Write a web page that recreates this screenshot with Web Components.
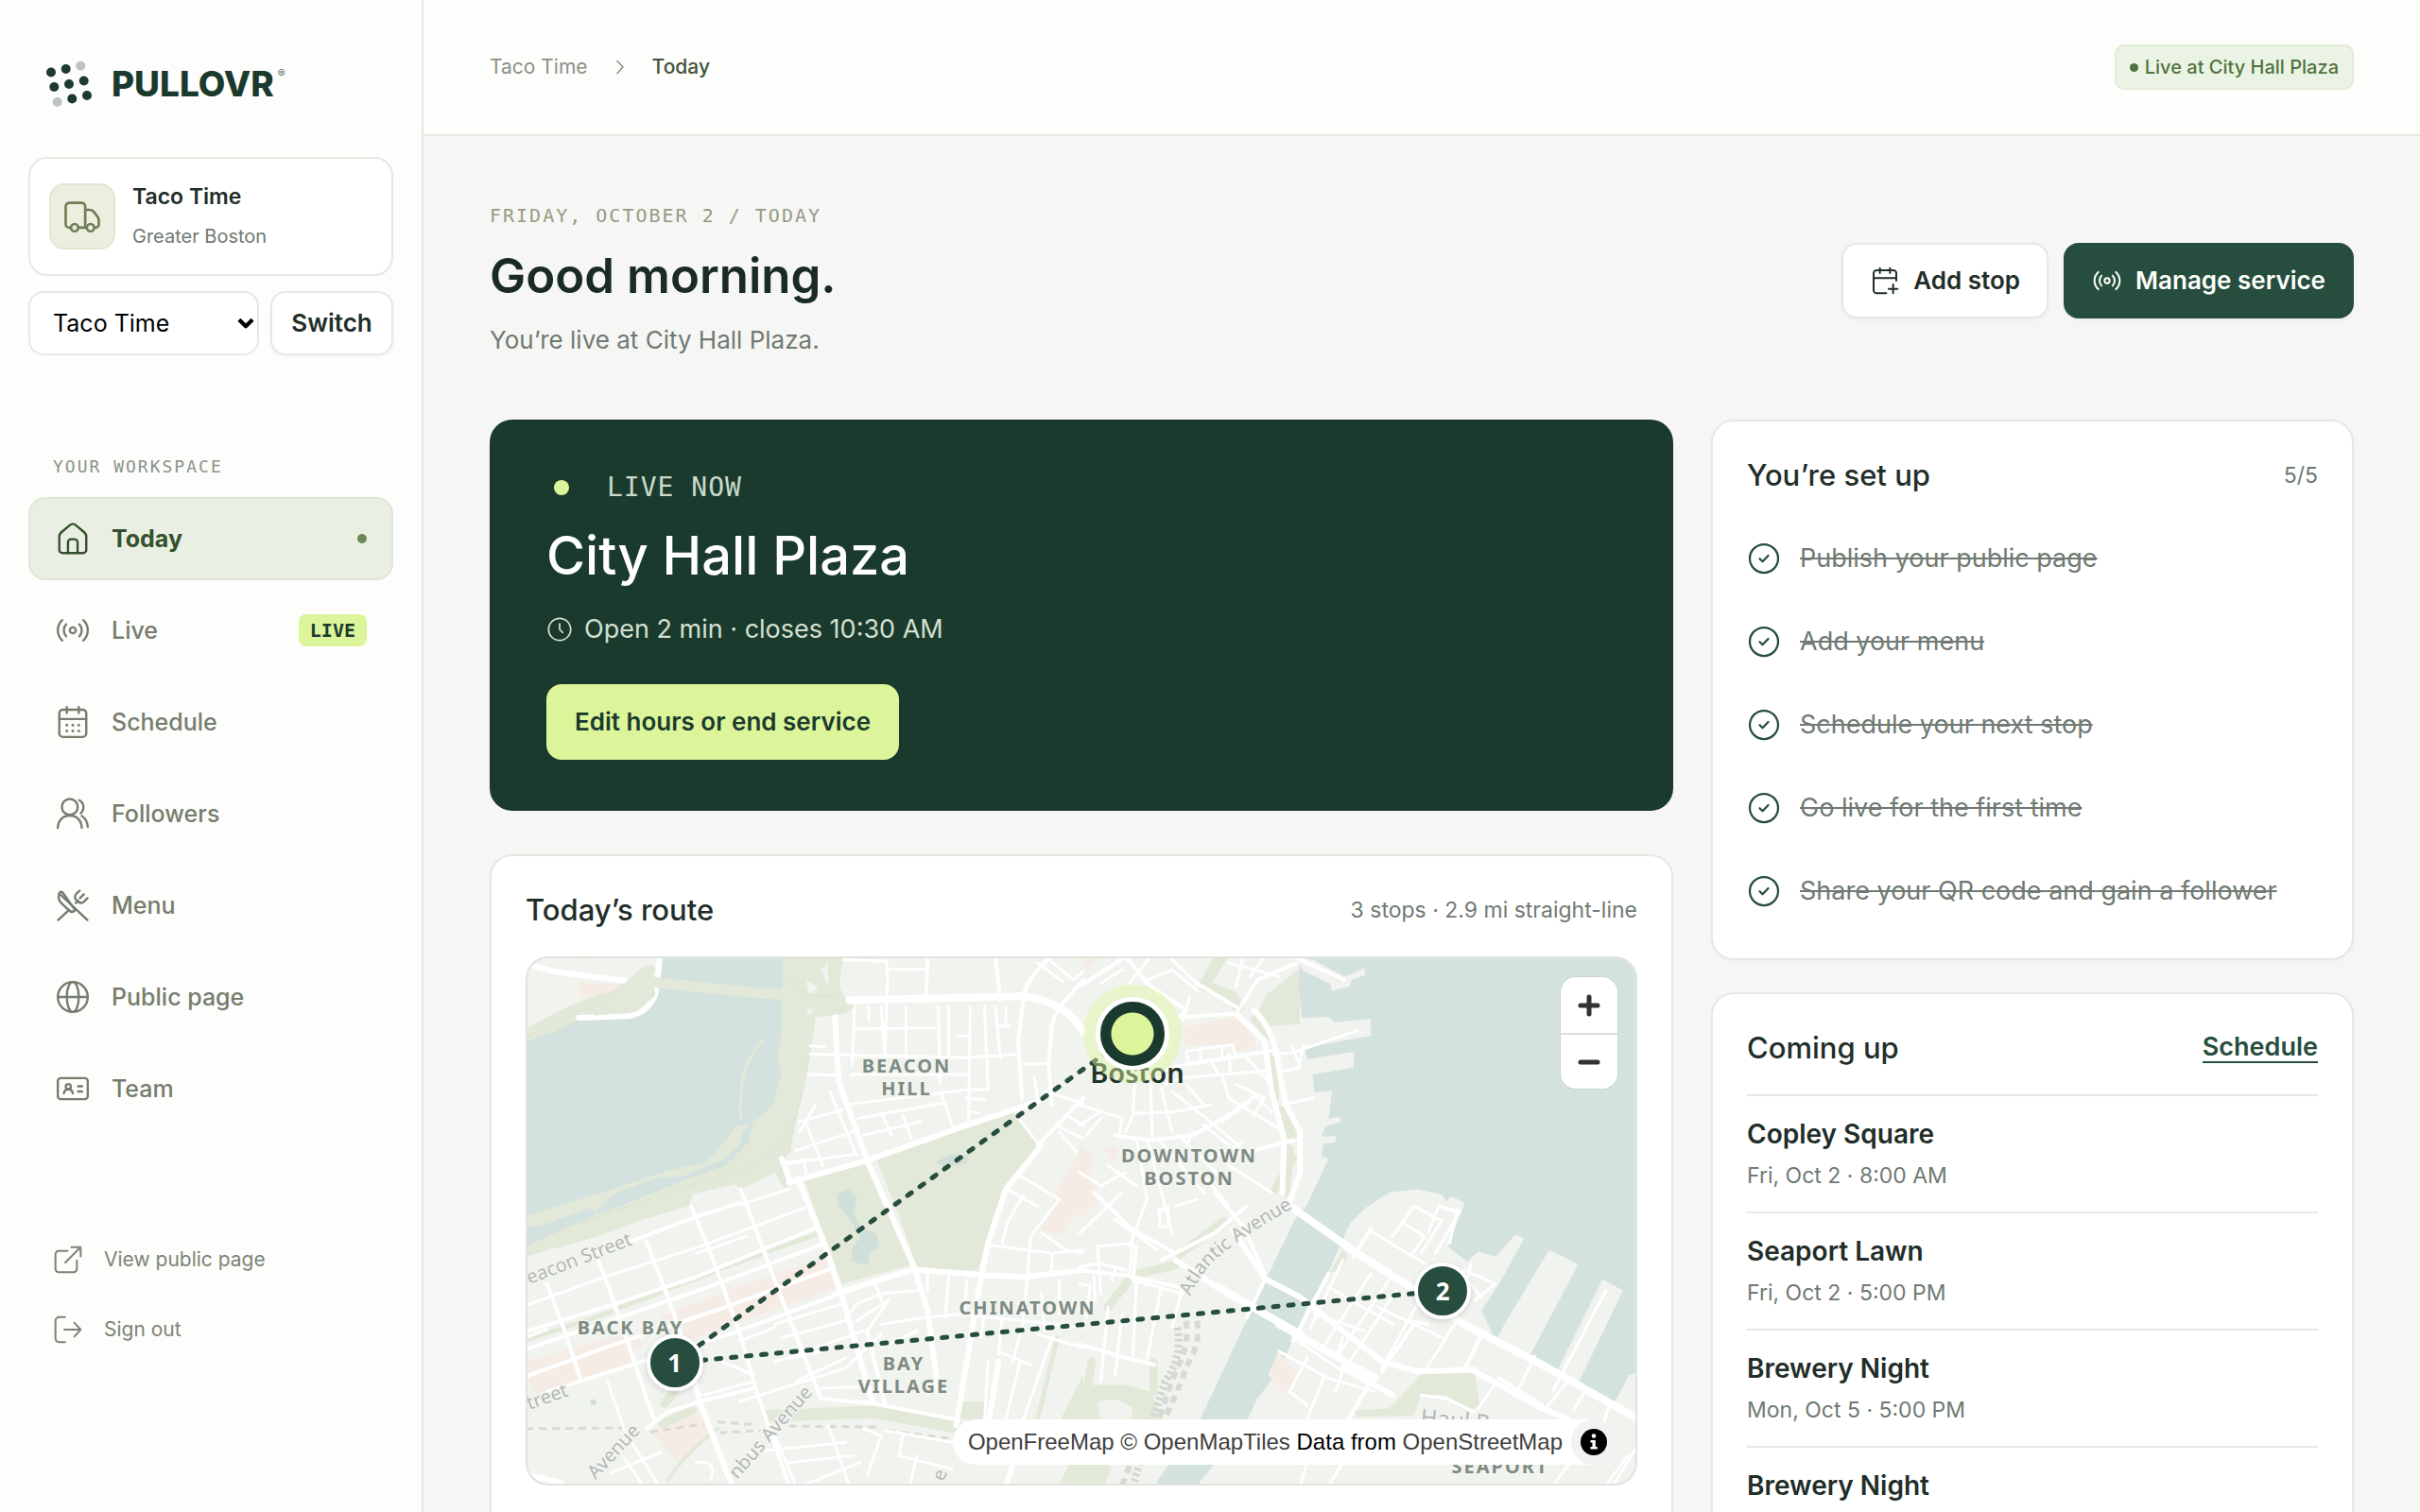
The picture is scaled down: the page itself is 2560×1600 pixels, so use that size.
<!DOCTYPE html>
<html lang="en">
<head>
<meta charset="utf-8">
<meta name="viewport" content="width=device-width, initial-scale=1">
<title>Pullovr – Today</title>
<style>
  :root {
    --ink: #1f2e29; --deep: #1b3a2e; --green: #264d3d; --lime: #ddf59a;
    --muted: #6f7a72; --nav: #757d6e; --line: #e6e8e3; --paper: #fdfdfb; --bg: #f6f6f4;
    --mono: "DejaVu Sans Mono", monospace;
  }
  html, body { margin: 0; height: 100%; }
  body { font-family: Inter, sans-serif; color: var(--ink); background: var(--bg); }
</style>
</head>
<body>
<pv-app></pv-app>
<script>
const define = (name, css, html) => customElements.define(name, class extends HTMLElement {
  connectedCallback() {
    if (this.shadowRoot) return;
    const root = this.attachShadow({ mode: 'open' });
    const t = document.createElement('template');
    t.innerHTML = `<style>*{box-sizing:border-box}${css}</style>` + (typeof html === 'function' ? html(this) : html);
    root.append(t.content.cloneNode(true));
  }
});

/* ---------- icons ---------- */
const ICONS = {
  home: '<path d="M3 10.4c0-1.1.4-1.8 1.2-2.5l5.9-5a3 3 0 0 1 3.8 0l5.9 5c.8.7 1.2 1.4 1.2 2.5V19.6a2 2 0 0 1-2 2H5a2 2 0 0 1-2-2z"/><path d="M8.8 21.6v-7.2a2 2 0 0 1 2-2h2.4a2 2 0 0 1 2 2v7.2"/>',
  live: '<circle cx="12" cy="12" r="2"/><path d="M7.6 8C6.6 9 6 10.4 6 12s.6 3 1.6 4M16.400 8c1 1 1.600 2.400 1.600 4s-.6 3-1.600 4M5 5.200C3.100 6.900 2 9.300 2 12s1.100 5.100 3 6.800M19 5.200c1.900 1.700 3 4.100 3 6.800s-1.100 5.100-3 6.800"/>',
  calendar: '<rect x="3" y="3.800" width="18" height="18.200" rx="2.400"/><path d="M8 2v4M16 2v4M3 10h18"/><path stroke-width="1.900" d="M8 14h.01M12 14h.01M16 14h.01M8 18h.01M12 18h.01M16 18h.01"/>',
  add: '<path d="M21 12V6.200a2.400 2.400 0 0 0-2.400-2.400H5.400A2.400 2.400 0 0 0 3 6.200v13.400A2.400 2.400 0 0 0 5.400 22H13M8 2v4M16 2v4M3 10h18M18.500 15v7M15 18.500h7"/>',
  users: '<circle cx="10" cy="7.500" r="5.300"/><path d="M2 21.500c.2-5 3.300-8.200 8-8.200s7.800 3.200 8 8.200M16.300 3a5.300 5.300 0 0 1 1 8.700M18 13.500c2.300 1.500 3.800 4.200 4 7.400"/>',
  menu: '<path d="m2.200 21.800 7.300-6.700M14 10.500l1.700-1.600M16.600 2.200 14.300 4.400c-1.300 1.300-1.100 2.900-.1 3.900l1.300 1.200c1.100 1 2.700 1.200 4 0l2.300-2.300M19.400 4.700l-2.600 2.500M21.800 21.800 3.400 4.500"/><path d="M3.300 3.400c-1.300 1.600-1 5 .6 6.600l5.500 5.400c1.100 1.100 2.700 1.300 4.200-.2L5.400 3.600c-.6-.7-1.500-.9-2.100-.2z"/>',
  globe: '<circle cx="12" cy="12" r="10"/><ellipse cx="12" cy="12" rx="4" ry="10"/><path d="M2 12h20"/>',
  card: '<rect x="2" y="5" width="20" height="14" rx="2"/><circle cx="9" cy="10.600" r="1.700"/><path d="M6 15.200c.3-1.700 1.400-2.700 3-2.700s2.700 1 3 2.700M15.500 10.400h2.700M15.500 13.900h2.700"/>',
  external: '<path d="M11.500 5H4.600A2.600 2.600 0 0 0 2 7.600v11.800A2.600 2.600 0 0 0 4.600 22h11.800a2.600 2.600 0 0 0 2.600-2.600V12.500M9.800 14.200 21.600 2.400M14.600 2h7.400v7.400"/>',
  out: '<path d="M9.500 2H5a3 3 0 0 0-3 3v14a3 3 0 0 0 3 3h4.500M9 12h13M17 6.500l5 5.500-5 5.500"/>',
  truck: '<path d="M5.200 18.800H4a2 2 0 0 1-2-2V6a2.200 2.200 0 0 1 2.200-2.200h7.400A2.200 2.200 0 0 1 13.800 6v12.800H9.500M13.800 8h2.700c1.100 0 1.900.4 2.500 1.200l2.300 3.100c.5.6.7 1.200.7 2v2.500a2 2 0 0 1-2 2h-.7M13.800 18.800h.8"/><circle cx="7.400" cy="18.800" r="2.200"/><circle cx="17" cy="18.800" r="2.200"/>',
  clock: '<circle cx="12" cy="12" r="10"/><path d="M12 7v5l2.800 2.800"/>',
  check: '<circle cx="12" cy="12" r="10"/><path d="m9 12.200 2 2 4-4.200"/>',
  chevron: '<path d="m9 5.500 6 6.500-6 6.500"/>',
  down: '<path stroke-width="5" stroke-linecap="butt" d="m3.500 7.500 8.500 8.500 8.500-8.500"/>'
};
define('pv-icon', `:host{display:block;flex:none;width:32px;height:32px}svg{display:block;width:100%;height:100%}`,
  el => `<svg viewBox="0 0 24 24" fill="none" stroke="currentColor" stroke-width="1.500" stroke-linecap="round" stroke-linejoin="round" aria-hidden="true">${ICONS[el.getAttribute('name')]}</svg>`);

/* ---------- basic controls ---------- */
define('pv-button', `
  :host{display:block}
  button{display:flex;align-items:center;justify-content:center;gap:14px;width:100%;height:80px;padding:0 28px;border:2px solid var(--line);border-radius:16px;background:#fff;color:var(--ink);font:600 26px/32px Inter,sans-serif;white-space:nowrap;box-shadow:0 2px 4px #1c3a2e0a}
  :host([kind=primary]) button{background:var(--green);border-color:var(--green);color:#fdfffb}
  :host([kind=lime]) button{background:var(--lime);border-color:var(--lime);color:var(--deep)}
  :host([size=small]) button{height:68px;padding:0 20px}`,
  `<button type="button"><slot name="icon"></slot><slot></slot></button>`);

define('pv-logo', `
  :host{display:block}
  a{display:flex;align-items:center;gap:20px;color:var(--deep);text-decoration:none;font:800 37px/50px Inter,sans-serif}
  svg{display:block;width:50px;height:50px}
  sup{align-self:flex-start;font:500 12px/12px Inter,sans-serif;margin:8px 0 0 -16px;color:#5e7068}`,
  `<a href="#"><svg viewBox="0 0 50 50" fill="#1c3a2e" aria-hidden="true">
    <circle cx="6" cy="12.500" r="5"/><circle cx="21.700" cy="9" r="5"/><circle cx="37.300" cy="5.700" r="5" fill="#bcc5c0"/>
    <circle cx="9.300" cy="28" r="5"/><circle cx="25" cy="25" r="5"/><circle cx="40.700" cy="21.500" r="5"/>
    <circle cx="12.600" cy="44" r="5" fill="#bcc5c0"/><circle cx="28.300" cy="40.500" r="5"/><circle cx="44" cy="37" r="5"/></svg>
    <span>PULLOVR</span><sup>®</sup></a>`);

/* ---------- sidebar ---------- */
define('pv-account', `
  :host{display:flex;align-items:center;gap:18px;height:126px;padding:0 20px;border:2px solid var(--line);border-radius:20px;background:#fff}
  .badge{display:grid;place-items:center;width:70px;height:70px;border:2px solid #e3e7d2;border-radius:16px;background:#eceedf;color:#707c53}
  pv-icon{width:42px;height:42px}
  div{display:grid;gap:10px} strong{font:600 23px/32px Inter,sans-serif} span{font:400 20px/32px Inter,sans-serif;color:var(--muted)}`,
  `<i class="badge"><pv-icon name="truck"></pv-icon></i><div><strong>Taco Time</strong><span>Greater Boston</span></div>`);

define('pv-switcher', `
  :host{display:block}
  form{display:grid;grid-template-columns:1fr 130px;gap:12px}
  label{display:grid;align-items:center}
  select{grid-area:1/1;appearance:none;width:100%;height:68px;padding:0 24px;border:2px solid var(--line);border-radius:16px;background:#fff;color:#000;font:400 25px/32px Inter,sans-serif}
  pv-icon{grid-area:1/1;justify-self:end;width:20px;height:20px;margin-right:4px;color:#000;pointer-events:none}`,
  `<form><label><select aria-label="Truck"><option>Taco Time</option></select><pv-icon name="down"></pv-icon></label><pv-button size="small">Switch</pv-button></form>`);

define('pv-nav-item', `
  :host{display:block}
  a{display:flex;align-items:center;gap:22px;height:88px;padding:0 26px;border:2px solid transparent;border-radius:18px;color:var(--nav);font:500 25px/32px Inter,sans-serif;text-decoration:none}
  pv-icon{width:38px;height:38px}
  span{flex:1}
  :host([active]) a{background:#eaefe3;border-color:#dfe6d8;color:#34502c;font-weight:700}
  i{width:10px;height:10px;border-radius:50%;background:#6b8a58}
  b{padding:0 12px;border-radius:8px;background:var(--lime);color:var(--deep);font:700 20px/34px var(--mono)}`,
  el => `<a href="#"><pv-icon name="${el.getAttribute('icon')}"></pv-icon><span><slot></slot></span>${el.hasAttribute('active') ? '<i></i>' : ''}${el.hasAttribute('tag') ? `<b>${el.getAttribute('tag')}</b>` : ''}</a>`);

define('pv-foot-link', `
  :host{display:block}
  a{display:flex;align-items:center;gap:22px;height:40px;padding-left:26px;color:#7b8474;font:400 21px/32px Inter,sans-serif;text-decoration:none}`,
  el => `<a href="#"><pv-icon name="${el.getAttribute('icon')}"></pv-icon><slot></slot></a>`);

define('pv-sidebar', `
  :host{display:flex;flex-direction:column;padding:64px 30px 0;background:var(--paper);border-right:2px solid var(--line)}
  pv-logo{margin:0 18px 52px}
  pv-switcher{margin-top:16px}
  h2{margin:106px 26px 20px;font:400 18px/24px var(--mono);letter-spacing:2px;color:#8a9389}
  nav{display:grid;gap:9px}
  footer{display:grid;gap:34px;margin-top:117px}`,
  `<pv-logo></pv-logo><pv-account></pv-account><pv-switcher></pv-switcher>
   <h2>YOUR WORKSPACE</h2>
   <nav>
    <pv-nav-item icon="home" active>Today</pv-nav-item>
    <pv-nav-item icon="live" tag="LIVE">Live</pv-nav-item>
    <pv-nav-item icon="calendar">Schedule</pv-nav-item>
    <pv-nav-item icon="users">Followers</pv-nav-item>
    <pv-nav-item icon="menu">Menu</pv-nav-item>
    <pv-nav-item icon="globe">Public page</pv-nav-item>
    <pv-nav-item icon="card">Team</pv-nav-item>
   </nav>
   <footer><pv-foot-link icon="external">View public page</pv-foot-link><pv-foot-link icon="out">Sign out</pv-foot-link></footer>`);

/* ---------- header ---------- */
define('pv-topbar', `
  :host{display:flex;flex:none;align-items:center;justify-content:space-between;height:144px;padding:0 70px;background:var(--paper);border-bottom:2px solid var(--line)}
  nav{display:flex;align-items:center;gap:22px;font:400 21px/32px Inter,sans-serif}
  a{color:#8b9187;text-decoration:none} b{font-weight:500;color:#41543a}
  pv-icon{width:24px;height:24px;color:#8b9187}
  p{display:flex;align-items:center;gap:7px;height:48px;margin:0;padding:0 14px;border:2px solid #e1ebd8;border-radius:10px;background:#ebf3e4;color:#50743f;font:500 20px/32px Inter,sans-serif}
  i{width:9px;height:9px;border-radius:50%;background:currentColor}`,
  `<nav aria-label="Breadcrumb"><a href="#">Taco Time</a><pv-icon name="chevron"></pv-icon><b>Today</b></nav><p><i></i>Live at City Hall Plaza</p>`);

define('pv-greeting', `
  :host{display:flex;align-items:center;justify-content:space-between}
  .eyebrow{margin:0;font:400 20px/28px var(--mono);letter-spacing:2px;color:#959b83}
  h1{margin:16px 0 14px;font:600 51px/68px Inter,sans-serif;color:#1a2a24}
  .lead{margin:0;font:400 26px/40px Inter,sans-serif;color:var(--muted)}
  .actions{display:flex;gap:16px}`,
  `<div><p class="eyebrow">FRIDAY, OCTOBER 2 / TODAY</p><h1>Good morning.</h1><p class="lead">You’re live at City Hall Plaza.</p></div>
   <div class="actions"><pv-button><pv-icon slot="icon" name="add"></pv-icon>Add stop</pv-button><pv-button kind="primary"><pv-icon slot="icon" name="live"></pv-icon>Manage service</pv-button></div>`);

/* ---------- cards ---------- */
define('pv-hero', `
  :host{display:flex;flex-direction:column;align-items:flex-start;padding:54px 60px;border-radius:24px;background:var(--deep);color:#fff}
  .state{display:flex;align-items:center;gap:40px;margin:0;padding-left:8px;font:400 28px/36px var(--mono);letter-spacing:1px;color:#c9dac9}
  i{width:16px;height:16px;border-radius:50%;background:var(--lime)}
  h2{margin:18px 0 22px;font:500 56px/72px Inter,sans-serif}
  .meta{display:flex;align-items:center;gap:12px;margin:0 0 38px;font:400 27px/40px Inter,sans-serif;color:#d3e0d0}
  pv-icon{width:28px;height:28px}`,
  `<p class="state"><i></i>LIVE NOW</p><h2>City Hall Plaza</h2><p class="meta"><pv-icon name="clock"></pv-icon>Open 2 min · closes 10:30 AM</p><pv-button kind="lime">Edit hours or end service</pv-button>`);

define('pv-card', `
  :host{display:block;padding:36px 36px var(--foot,64px);border:2px solid var(--line);border-radius:24px;background:#fff;box-shadow:0 2px 4px #1c3a2e08}
  header{display:flex;align-items:center;justify-content:space-between;height:42px;margin-bottom:var(--gap,28px)}
  h2{margin:0;font:500 31px/40px Inter,sans-serif;color:#1f2e29}`,
  el => `<header><h2>${el.getAttribute('heading')}</h2><slot name="aside"></slot></header><slot></slot>`);

define('pv-check-item', `
  :host{display:flex;align-items:center;gap:20px;height:88px;font:400 27px/40px Inter,sans-serif;color:var(--muted)}
  pv-icon{width:36px;height:36px;color:var(--green)} s{text-decoration-thickness:2px}`,
  `<pv-icon name="check"></pv-icon><s><slot></slot></s>`);

define('pv-stop', `
  :host{display:grid;gap:4px;padding:20px 0 18px;border-top:2px solid var(--line)}
  strong{font:600 28px/40px Inter,sans-serif;color:#1f2e29} span{font:400 23px/40px Inter,sans-serif;color:var(--muted)}`,
  el => `<strong>${el.getAttribute('place')}</strong><span><slot></slot></span>`);

/* ---------- map ---------- */
const MAP_LEFT = `
 <path class="park" d="M0 890 200 830 330 780 460 740 470 705 590 675 605 690 700 640 725 685 742 680 735 640 722 610 745 580 760 490 800 300 815 180 900 170 926 150 895 120 882 90 892 0H0Z"/>
 <path class="water" d="M0 250 80 225 160 180 290 178 350 150 376 90 388 0H725L722 100 720 220 708 300 720 345 695 440 655 480 625 498 590 505 550 560 510 610 400 635 200 705 0 770Z"/>
 <path class="water" d="M0 805 60 792 180 745 200 755 225 725 255 700 370 655 450 650 560 600 600 560 612 520 640 485 628 550 560 620 420 675 240 752 190 768 0 862Z"/>
 <path class="thinpark" d="M665 250C610 320 600 380 605 480"/>
 <path class="land" d="M0 0H380L362 60 330 30 300 60 250 90 120 150 0 215Z"/>
 <path class="pink" d="M145 75 270 85 250 100 160 125ZM100 0H200L170 10Z"/>
 <path class="land" d="M790 70 822 90 795 125ZM830 40 850 20 852 90ZM790 150 812 160 795 175Z"/>
 <g class="r5"><path d="M0 22 80 45 280 72"/><path d="M378 0 366 110Q345 168 290 177L150 182"/></g>
 <g class="parkline" stroke-width="11"><path d="M0 232 120 165 250 118 330 60 350 40"/><path d="M200 160 300 150 350 110 340 60"/><path d="M345 75 480 90 620 105 740 115 905 145"/></g>
 <g class="thinpark2"><path d="M795 300C770 480 740 600 560 650S150 800 0 840"/><path d="M740 60C780 130 860 130 885 100"/><path d="M0 240 130 172 260 120"/></g>
 <path class="pink" d="M380 1065 700 940 850 890 870 985 600 1085 430 1150 380 1160ZM0 1200 300 1110 330 1160 20 1290ZM20 1250 290 1160 310 1205 30 1298ZM350 1405 500 1350 520 1400 430 1500ZM1568 560 1500 680 1450 810 1500 830 1568 740Z"/>
 <path class="park" d="M785 665 955 612 1020 760 1080 915 890 970 855 880ZM985 600 1370 465 1440 560 1350 690 1300 850 1270 932 1100 925 1050 770Z"/>
 <path class="pond" d="M875 705 910 690 932 715 922 760 942 805 985 820 995 860 968 880 962 915 915 905 920 860 940 835 915 785 880 740ZM1150 610 1200 585 1245 590 1240 612 1180 625Z"/>
 <g class="parkline" stroke-width="5"><path d="M0 1137 242 1053M262 1043 380 995M405 983 530 935M550 925 665 882M685 872 815 825"/></g>
 <g class="parkline" stroke-width="13"><path d="M685 1362 980 1350 1210 1395"/><path d="M385 1385 470 1345M390 1325 420 1290" stroke-width="9"/><path d="M400 1550Q460 1460 540 1400" stroke-width="4"/><path d="M1495 1130 1440 1370" stroke-width="5"/></g>
 <path class="park" d="M1568 1240 1500 1380 1568 1380ZM1220 1320 1300 1320 1280 1380 1220 1370ZM1530 1500H1568V1568H1500Z"/>
 <circle class="pond" cx="190" cy="1321" r="8"/>
 <g class="rail"><path d="M0 1400 300 1397M350 1410 500 1385M540 1380 650 1388M545 1412 660 1405M740 1392 1000 1395M1020 1405 1200 1430"/></g>
 <g class="r2">
  <path d="M0 1035 210 955 490 860 785 745M605 735 740 690M480 880 620 830M0 1130 60 1105"/>
  <path d="M700 1090 890 1030M720 1130 900 1080M760 1180 950 1110M600 1140 700 1100"/>
  <path d="M895 10 1015 15 1018 60 1010 290M1015 38 1120 38M925 215 1150 212M965 150V190M1000 150 1010 300M1070 150V300M1160 150 1165 380M1190 150V300M1250 150 1245 495M1290 150 1300 390M1320 150 1335 300M1350 150V210M925 150 918 320M915 350H1240M800 290 1240 300 1385 290M795 350 870 352M1210 235H1245M1330 205H1360M1240 395H1300M1240 420 1290 425M1245 460 1275 465"/>
  <path d="M800 265 840 268M770 490 890 455M760 575 920 520M740 615 930 585M855 400 930 590M790 500 835 620M815 440 770 520M900 440 1240 395M935 480 1170 435M950 530 1110 490M1000 465 1030 530M1060 470 1085 540M1170 410 1200 505M730 610 830 600M780 600 790 640"/>
  <path d="M1400 320 1470 318M1430 360 1440 430M1385 480 1445 560M1460 400 1568 435M1490 500 1568 540M1520 470 1568 500M1500 520 1550 580M1440 20 1510 75M1460 0 1540 70 1568 45"/>
  <path d="M1390 650 1500 720 1420 830 1410 950M1350 690 1440 740M1400 710Q1350 780 1340 850M1300 855 1480 880 1568 870M1450 820 1520 870 1568 880M1480 880 1478 940"/>
  <path d="M1100 930 1110 990 1000 1000 930 1030 900 1080M985 975 1000 1020M930 1080 1020 1020 960 1110M1130 940V990M1190 940 1180 1070M1240 960 1235 1060M1000 1090 1130 1070 1220 1060 1568 1100M1000 1160 1100 1110"/>
  <path d="M1290 1060 1280 1130M1340 1060 1330 1180M1400 1080 1370 1200M1410 960 1395 1100M1450 1000 1460 1110M1500 960V1060M1330 1170 1420 1210M1390 1200 1350 1370M1440 1120 1568 1160M1300 1200 1290 1380M1480 1130 1400 1370"/>
  <path d="M600 1320 900 1220 1000 1120M830 1280 960 1275M760 1260 900 1190M700 1200 830 1170M550 1200 640 1240M500 1300 640 1260"/>
  <path d="M230 1260 280 1410 370 1560M280 1490 330 1568M240 1530 380 1470M480 1500Q540 1490 520 1550"/>
  <path d="M620 1470 900 1440M700 1420 760 1568M740 1500 920 1480M850 1390 910 1568M780 1568 940 1500M950 1400 1000 1420 960 1540M1060 1420 1050 1480 1200 1520M1100 1480 1080 1568M1010 1405 1200 1440"/>
 </g>
 <g class="r3">
  <path d="M270 855 470 775 605 730M0 1112 250 1030 480 950 820 803M0 1165 500 985 830 855M0 1245 250 1150 560 1040 860 925M60 1290 300 1210 600 1110 870 1005"/>
  <path d="M465 740 520 880 600 1110 650 1290 740 1568M605 690 700 960 830 1310M340 845 400 1010 440 1130 M205 900 260 1060 360 1370M60 970 110 1110 155 1255"/>
  <path d="M1400 120 1385 250 1395 420M1500 150 1480 200 1470 320 1480 440M1400 110Q1420 50 1480 0M1130 10 1125 130M1320 0 1335 130M1568 70 1500 150M1440 560 1568 420"/>
  <path d="M830 1310 975 1325 1200 1370M340 1400 400 1350 490 1320 640 1280M960 1110 1010 1325"/>
 </g>
 <g class="r5">
  <path d="M740 670 960 605 1240 500 1440 430M720 600 745 670"/><path d="M770 670 840 850 890 1010 975 1320M870 180 880 370 960 605 1090 915 1130 1050 1160 1290M440 1130 490 1320 580 1568"/>
  <path d="M870 1000 1090 928 1290 945 1400 950 1568 930M1450 560 1350 690 1300 850 1270 1010 1210 1390"/>
  <path d="M1330 1200 1300 1390M1390 1440 1350 1568"/><path d="M0 1535 100 1560"/>
 </g>
 <path class="r7" d="M910 130 1400 118Q1520 135 1568 225"/>`;
const MAP_RIGHT = `
 <path class="water" d="M620 0H1568V1235L1545 1240 1500 1330 1395 1280 1528 990 1470 958 1340 1235 1265 1185 1402 912 1320 870 1195 1090 1170 1140 1130 1050 1185 960 1250 835 1225 825 1170 890 1120 875 1090 905 1035 860 1083 730 1045 712 1030 725 1020 706 950 690 870 700 805 745 762 790 735 850 700 935 640 1040 590 1160 560 1230 500 1310 460 1400 330 1568H210L340 1370 420 1190 500 1010 550 900 605 780 640 735 700 600 680 592 685 555 720 552 720 532 680 535 690 505 735 490 730 475 700 482 710 400 660 402 655 350 770 330 772 283 700 295 640 305 632 270 820 235 818 185 720 195 700 180 625 182 615 90Z"/>
 <path class="land" d="M610 0 660 12 745 60 800 35 804 55 765 70 760 88 710 102 705 82 625 40Z"/>
 <path class="park" d="M615 40 620 200 500 210Q490 170 530 110ZM0 1270 60 1270 130 1270 200 1290 240 1380 0 1380ZM770 1345 870 1340 970 1230 1110 1225 1125 1330 1100 1345 1030 1300 960 1300 940 1360 780 1365ZM700 940 740 870 755 890 730 930ZM0 1490 90 1510 70 1568H0Z"/>
 <path class="pink" d="M290 210 430 180Q490 210 495 275L440 280 430 260 300 265ZM0 0H60L20 40ZM0 560 40 590 30 640 50 730 0 780ZM70 570 110 560 100 610ZM260 390 300 380 300 400ZM560 1170 620 1250 580 1300 530 1240Z"/>
 <g class="parkline" stroke-width="12"><path d="M400 0 350 85 430 120 445 150"/><path d="M545 280 550 420" stroke-width="8"/><path d="M490 185 530 240" stroke-width="7"/><path d="M575 450 595 530" stroke-width="12"/><path d="M590 570 580 700M600 600 550 690" stroke-width="9"/><path d="M405 785 280 885M270 915 150 945 80 1040" stroke-width="9"/><path d="M35 1200 20 1290M208 1205V1290" stroke-width="9"/></g>
 <path class="land" d="M50 1320Q110 1300 150 1340L145 1372H60Z"/>
 <path d="M275 1100 Q290 1190 240 1260 L150 1568" fill="none" stroke="#d3d7d1" stroke-width="8" stroke-dasharray="3 3" vector-effect="non-scaling-stroke"/>
 <g class="rail" style="stroke-width:6"><path d="M300 1080C310 1180 270 1210 250 1290L220 1380M330 1080C345 1160 300 1200 290 1250L240 1370M120 1568 140 1510"/></g>
 <g class="r2">
  <path d="M0 440 120 480 110 530M0 500 60 460M20 530 60 480M155 380 150 470 130 520M200 380 205 540M230 390 260 520M240 380 290 360M150 465 260 462 370 440M260 400 380 500 480 590M300 380 350 440M300 360 400 350 420 420M370 310 390 350 530 340M420 290 425 350M460 290 540 380M300 290 310 320 440 300 430 262 302 280M340 270V310M400 265V305"/>
  <path d="M420 420 560 510M440 380 520 420 490 470M470 390 540 460M440 450 500 410M400 490 480 430M350 500 420 560M280 530 420 680M220 540 350 700M320 520 300 560M420 620 540 700M370 600 460 550M190 540 260 820M160 540 190 720 140 860M80 620 160 680M60 680 130 640M0 640 60 680M340 640 420 740M270 740 330 720M220 750 250 745V800H225V750"/>
  <path d="M0 820 120 700M50 860 140 850M50 860 60 1000M0 920 60 910 130 930M100 780 220 870M150 850 140 940M0 970 30 975 20 1070M40 950 45 1020M90 960 100 930M160 960 150 1180M230 980 190 1190M120 1060 100 1240M80 1040 60 1260M290 980 260 1100M150 960 290 1000"/>
  <path d="M200 0 140 80M60 80 120 40M190 70 260 40 330 100M250 0 330 80M310 120 290 190M420 20 560 60M460 0 440 90M520 0 480 60"/>
  <path d="M570 440 655 420M600 270 620 330 570 340M630 265 615 330M545 290 600 285 780 220M620 545 560 552"/>
  <path d="M880 830 940 740 1010 780M910 790 970 830 930 890M980 820 1010 740 1060 760 1040 850M1020 780 960 880M820 815 970 910M1010 740 1070 755 1000 880"/>
  <path d="M740 900 650 1100M820 940 690 1150M870 960 720 1190M890 990 760 1200M950 1030 850 1220M700 980 880 1090M660 1060 800 1110M840 1040 1020 1130M930 1080 980 1090M1060 1080 970 1230M1080 930 1170 970 1110 1020M1100 910 1090 960 1130 1010"/>
  <path d="M600 1130 740 1230 720 1290M640 1190 590 1290 640 1330M690 1240 640 1370M560 1170 700 1250 830 1290M740 1130 720 1190M1280 1185 1230 1290M1380 1250 1310 1340M1480 990 1330 1290M1420 1290 1390 1345M1490 1330 1470 1390M960 1300 1030 1310 1110 1350M1180 1250 1120 1340"/>
  <path d="M620 1568 640 1500M700 1568 740 1500M1330 1568 1380 1500M1480 1568 1540 1480M1568 1450 1500 1568"/>
 </g>
 <g class="r3">
  <path d="M0 90 130 0M130 0 190 80M190 80 300 160 280 180M330 80 440 150M290 180 440 170M440 170 500 70 610 20M210 345 300 320 540 280M40 700 150 810 270 880M230 900 380 820 470 740M380 700 460 800 520 940M100 530 200 545 320 530 450 450M430 590 600 545M600 0 745 70"/>
  <path d="M90 1180 210 1210M0 1150 100 1180M770 890 820 805M520 960 470 1070M700 940 600 1140M830 1240 740 1400M940 1090 850 1230M1130 1120 1080 1230M1180 1250 1300 1330"/>
  <path d="M0 930 130 945 280 980M160 860 150 960"/>
 </g>
 <g class="r5">
  <path d="M440 170 520 250 540 400 575 540 570 700M490 160Q550 220 560 330L580 440 620 520 620 640 590 730"/>
  <path d="M520 955 620 1010 740 1110 850 1200 950 1230 1110 1225M270 900 400 990 600 1110M740 1220 880 1300"/>
  <path d="M1110 1230 1300 1340 1370 1370M430 810 520 955"/>
 </g>
 <g class="r7"><path d="M585 735 780 880 930 980 1080 1090 1300 1210 1568 1370"/><path d="M390 980 620 1120M560 1090 830 1250"/></g>`;

define('pv-pin', `
  :host{position:absolute;transform:translate(-50%,-50%)}
  button{display:grid;place-items:center;width:60px;height:60px;padding:0;border:4px solid #fff;border-radius:50%;background:var(--green);color:#fff;font:700 26px/32px "Noto Sans",sans-serif;box-shadow:0 2px 6px #0002}
  :host([live]) button{width:78px;height:78px;border-width:5px;background:radial-gradient(circle,var(--lime) 0 22px,var(--deep) 23px);box-shadow:0 0 0 13px #ddf59a70}`,
  el => `<button type="button" aria-label="Stop ${el.getAttribute('label')}"><slot></slot></button>`);

define('pv-map', `
  :host{display:block;position:relative;height:560px;border-radius:24px;overflow:hidden;background:#f0f2ee}
  .map{display:block;width:100%;height:100%}
  .edge{position:absolute;inset:0;border:2px solid #dfe5dd;border-radius:24px;pointer-events:none}
  .land{fill:#f1f3ef}.water{fill:#d4e2df}.pond{fill:#d1dfda}.park{fill:#e3e9d8}.pink{fill:#f6ece6}
  .parkline,.thinpark,.thinpark2,.rail,.r2,.r3,.r5,.r7{fill:none;stroke-linejoin:round;stroke-linecap:round}
  .parkline *,.thinpark,.thinpark2 *,.rail *,.r2 *,.r3 *,.r5 *,.r7,.r7 *{vector-effect:non-scaling-stroke}
  .parkline,.thinpark{stroke:#e3e9d8}.thinpark{stroke-width:3}.thinpark2{stroke:#dbe2cf;stroke-width:1}
  .rail{stroke:#d7dad4;stroke-width:3;stroke-dasharray:8 6;stroke-linecap:butt}
  .r2,.r3,.r5,.r7{stroke:#fff}.r2{stroke-width:3}.r3{stroke-width:4}.r5{stroke-width:6}.r7{stroke-width:8}
  text{font-family:"Noto Sans",sans-serif}
  .area{font-weight:700;font-size:20px;letter-spacing:2px;fill:#7d8b83;text-anchor:middle;stroke:#f3f5f1;stroke-width:3px;paint-order:stroke}
  .street{font-size:20px;fill:#b3b8b3;stroke:#f3f5f1;stroke-width:3px;paint-order:stroke}
  .city{font-weight:600;font-size:29px;fill:#22352d;text-anchor:middle}
  .route{fill:none;stroke:var(--green);stroke-width:5;stroke-linecap:round;stroke-dasharray:5 11}
  .zoom{position:absolute;top:22px;right:21px;display:grid;width:60px;border-radius:16px;background:#fff;overflow:hidden;box-shadow:0 0 0 1px #0000000d}
  .zoom button{display:grid;place-items:center;height:59px;padding:0;border:0;background:none}
  .zoom button+button{border-top:2px solid #ddd}
  .zoom svg{width:26px;height:26px}
  .credit{position:absolute;right:22px;bottom:22px;display:flex;align-items:center;gap:9px;height:48px;padding:0 0 0 16px;border-radius:24px;background:#fff;color:#000;font:24px/32px "Liberation Sans",sans-serif;white-space:nowrap}
  .credit a{color:#404040;text-decoration:none}
  .credit button{display:grid;width:48px;height:48px;place-items:center;padding:0;border:0;border-radius:50%;background:#f2f2f2}
  .credit svg{width:28px;height:28px}`,
  `<svg class="map" viewBox="0 0 1176 560" preserveAspectRatio="xMidYMid slice" role="img" aria-label="Map of today's route through Boston">
    <rect class="land" width="1176" height="560"/>
    <g transform="scale(.3763 .3571)">${MAP_LEFT}</g>
    <g transform="translate(586 0) scale(.3763 .3571)">${MAP_RIGHT}</g>
    <text class="street" transform="translate(4 347) rotate(-21)">eacon Street</text>
    <text class="street" transform="translate(4 480) rotate(-20)">treet</text>
    <text class="street" transform="translate(74 554) rotate(-47)">Avenue</text>
    <text class="street" transform="translate(224 554) rotate(-49)">nbus Avenue</text>
    <text class="street" transform="translate(443 556) rotate(-75)">e</text>
    <path id="atl" d="M703 360C718 326 736 310 812 266" fill="none"/>
    <text class="street"><textPath href="#atl">Atlantic Avenue</textPath></text>
    <text class="street" style="font-size:24px" transform="translate(946 496) rotate(5)">Haul R</text>
    <text class="area" x="403" y="123">BEACON</text><text class="area" x="403" y="147">HILL</text>
    <text class="area" x="702" y="218">DOWNTOWN</text><text class="area" x="702" y="242">BOSTON</text>
    <text class="area" x="531" y="379">CHINATOWN</text>
    <text class="area" x="111" y="400">BACK BAY</text>
    <text class="area" x="400" y="438">BAY</text><text class="area" x="400" y="462">VILLAGE</text>
    <text class="area" x="1031" y="547">SEAPORT</text>
    <text class="city" x="647" y="134">Boston</text>
    <path class="route" d="M642 82 158 430 970 354"/>
   </svg>
   <pv-pin live label="live" style="left:54.6%;top:14.6%"></pv-pin>
   <pv-pin label="1" style="left:13.4%;top:76.8%">1</pv-pin>
   <pv-pin label="2" style="left:82.5%;top:63.2%">2</pv-pin>
   <div class="edge"></div>
   <div class="zoom"><button type="button" aria-label="Zoom in"><svg viewBox="0 0 26 26" stroke="#333" stroke-width="5" stroke-linecap="round"><path d="M4 13h18M13 4v18"/></svg></button><button type="button" aria-label="Zoom out"><svg viewBox="0 0 26 26" stroke="#333" stroke-width="5" stroke-linecap="round"><path d="M4 13h18"/></svg></button></div>
   <div class="credit"><span><a href="#">OpenFreeMap</a> <a href="#">© OpenMapTiles</a> Data from <a href="#">OpenStreetMap</a></span><button type="button" aria-label="Attribution"><svg viewBox="0 0 28 28"><circle cx="14" cy="14" r="14"/><circle cx="14" cy="7.500" r="2.300" fill="#fff"/><path d="M10.500 12h5.300v7h2v2.500h-7.300V19h2v-4.500h-2z" fill="#fff"/></svg></button></div>`);

/* ---------- page ---------- */
define('pv-app', `
  :host{display:grid;grid-template-columns:448px 1fr;height:100vh;overflow:hidden}
  main{display:flex;flex-direction:column;min-width:0;overflow:hidden}
  .body{padding:70px 70px 0}
  .grid{display:grid;grid-template-columns:minmax(0,1fr) 680px;gap:40px;align-items:start;margin-top:64px}
  .col{display:grid}.left{gap:46px}.right{gap:34px}
  .note{font-size:23px;line-height:32px;color:var(--muted)}
  .link{font:600 27px/30px Inter,sans-serif;color:var(--green);text-decoration:none;border-bottom:2px solid currentColor}`,
  `<pv-sidebar></pv-sidebar>
   <main><pv-topbar></pv-topbar>
    <div class="body"><pv-greeting></pv-greeting>
     <div class="grid">
      <div class="col left"><pv-hero></pv-hero>
       <pv-card heading="Today’s route"><span slot="aside" class="note">3 stops · 2.9 mi straight-line</span><pv-map></pv-map></pv-card></div>
      <div class="col right">
       <pv-card heading="You’re set up" style="--gap:23px;--foot:27px"><span slot="aside" class="note">5/5</span>
        <pv-check-item>Publish your public page</pv-check-item><pv-check-item>Add your menu</pv-check-item><pv-check-item>Schedule your next stop</pv-check-item><pv-check-item>Go live for the first time</pv-check-item><pv-check-item>Share your QR code and gain a follower</pv-check-item></pv-card>
       <pv-card heading="Coming up"><a slot="aside" class="link" href="#">Schedule</a>
        <pv-stop place="Copley Square">Fri, Oct 2 · 8:00 AM</pv-stop><pv-stop place="Seaport Lawn">Fri, Oct 2 · 5:00 PM</pv-stop><pv-stop place="Brewery Night">Mon, Oct 5 · 5:00 PM</pv-stop><pv-stop place="Brewery Night"></pv-stop></pv-card>
      </div>
     </div>
    </div>
   </main>`);
</script>
</body>
</html>
